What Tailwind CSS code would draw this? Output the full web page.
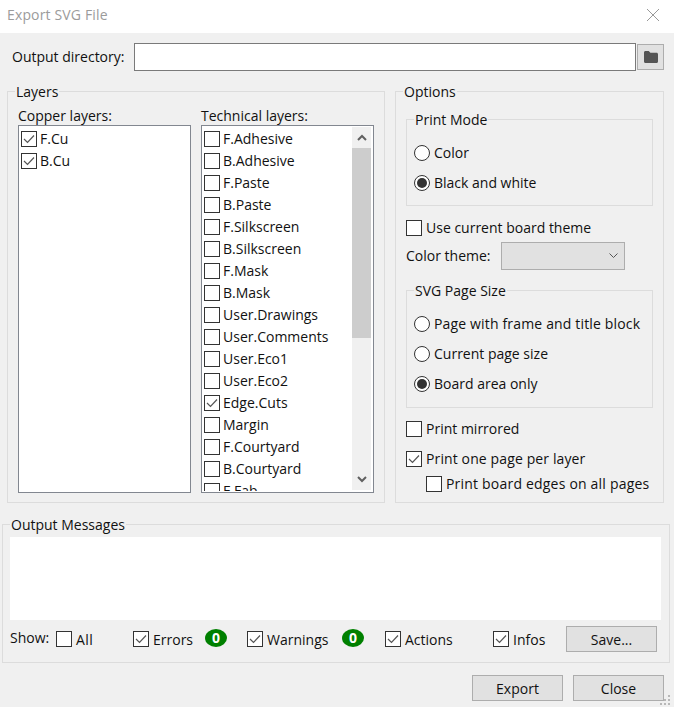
<!DOCTYPE html>
<html lang="en">

<head>
    <meta charset="UTF-8">
    <title>Export SVG File</title>
    <script src="https://cdn.jsdelivr.net/npm/@tailwindcss/browser@4"></script>
</head>

<body class="bg-[#f0f0f0]">
    <div class="relative w-[674px] h-[707px] overflow-hidden bg-[#f0f0f0] font-['Open_Sans',sans-serif] text-[14px] leading-[20px] text-[#111]">

        <!-- title bar -->
        <div class="flex items-center justify-between h-[33px] bg-white pl-[7px] pr-[15px] pb-[4px]">
            <span class="text-[#9b9b9b] tracking-[0.15px]">Export SVG File</span>
            <svg class="w-[12px] h-[12px]" viewBox="0 0 12 12" fill="none" stroke="#999" stroke-width="1">
                <path d="M0 0 12 12M12 0 0 12" />
            </svg>
        </div>

        <!-- output directory -->
        <div class="flex items-center h-[28px] mt-[10px] pl-[12px]">
            <span class="w-[122px]">Output directory:</span>
            <div class="w-[502px] h-[28px] bg-white border border-[#7a7a7a]"></div>
            <button class="flex items-center justify-center w-[27px] h-[26px] ml-[1px] bg-[#e1e1e1] border border-[#adadad]">
                <svg class="w-[14px] h-[12px]" viewBox="0 0 14 12" fill="#555">
                    <path d="M0 1.5C0 .6.6 0 1.5 0h3.2L6.4 1.8h6.1c.9 0 1.5.6 1.5 1.5v7.2c0 .9-.6 1.5-1.5 1.5h-11C.6 12 0 11.400 0 10.500z" />
                </svg>
            </button>
        </div>

        <div class="flex gap-[10px] mt-[20px] pl-[7px]">
            <!-- layers -->
            <div class="relative flex gap-[10px] w-[378px] h-[412px] pt-[33px] pl-[10px] border border-[#dcdcdc]">
                <span class="absolute -top-[10px] left-[7px] px-[1px] bg-[#f0f0f0]">Layers</span>

                <div class="relative w-[173px]">
                    <span class="absolute -top-[19px] left-0">Copper layers:</span>
                    <div class="h-[368px] pt-[2px] pl-[2px] bg-white border border-[#828790]">
                        <div class="flex items-center gap-[3px] h-[22px]">
                            <span class="flex items-center justify-center w-4 h-4 border border-[#333] bg-white"><svg class="w-[12px] h-[10px]" viewBox="0 0 12 10" fill="none" stroke="#555" stroke-width="1.200"><path d="M1 5 4.500 8.500 11 1.500" /></svg></span>
                            <span>F.Cu</span>
                        </div>
                        <div class="flex items-center gap-[3px] h-[22px]">
                            <span class="flex items-center justify-center w-4 h-4 border border-[#333] bg-white"><svg class="w-[12px] h-[10px]" viewBox="0 0 12 10" fill="none" stroke="#555" stroke-width="1.200"><path d="M1 5 4.500 8.500 11 1.500" /></svg></span>
                            <span>B.Cu</span>
                        </div>
                    </div>
                </div>

                <div class="relative w-[173px]">
                    <span class="absolute -top-[19px] left-0">Technical layers:</span>
                    <div class="flex h-[368px] bg-white border border-[#828790]">
                        <div id="tech-layers" class="flex-1 h-[365px] overflow-hidden pt-[2px] pl-[2px]"></div>
                        <div class="flex flex-col w-[19px] h-[363px] mt-[1px] mr-[2px] bg-[#f0f0f0]">
                            <div class="flex items-center justify-center h-[21px]">
                                <svg class="w-[10px] h-[7px]" viewBox="0 0 10 7" fill="none" stroke="#606060" stroke-width="2"><path d="M1 6 5 2 9 6" /></svg>
                            </div>
                            <div class="h-[190px] bg-[#cdcdcd]"></div>
                            <div class="flex-1"></div>
                            <div class="flex items-center justify-center h-[21px]">
                                <svg class="w-[10px] h-[7px]" viewBox="0 0 10 7" fill="none" stroke="#606060" stroke-width="2"><path d="M1 1 5 5 9 1" /></svg>
                            </div>
                        </div>
                    </div>
                </div>
            </div>

            <!-- options -->
            <div class="relative w-[269px] h-[412px] pt-[27px] pl-[10px] border border-[#dcdcdc]">
                <span class="absolute -top-[10px] left-[7px] px-[1px] bg-[#f0f0f0]">Options</span>

                <div class="relative w-[247px] h-[87px] pt-[22px] pl-[7px] border border-[#dcdcdc]">
                    <span class="absolute -top-[10px] left-[7px] px-[1px] bg-[#f0f0f0]">Print Mode</span>
                    <div class="flex flex-col gap-[8px]">
                        <div class="flex items-center gap-[4px] h-[22px]">
                            <span class="w-4 h-4 rounded-full border border-[#333] bg-white"></span>
                            <span>Color</span>
                        </div>
                        <div class="flex items-center gap-[4px] h-[22px]">
                            <span class="flex items-center justify-center w-4 h-4 rounded-full border border-[#333] bg-white"><span class="w-[10px] h-[10px] rounded-full bg-[#333]"></span></span>
                            <span>Black and white</span>
                        </div>
                    </div>
                </div>

                <div class="flex items-center gap-[4px] h-[22px] mt-[11px]">
                    <span class="w-4 h-4 border border-[#333] bg-white"></span>
                    <span>Use current board theme</span>
                </div>

                <div class="flex items-center h-[28px] mt-[3px]">
                    <span class="w-[95px]">Color theme:</span>
                    <div class="flex items-center justify-end w-[124px] h-[28px] pr-[6px] bg-[#e1e1e1] border border-[#adadad]">
                        <svg class="w-[9px] h-[6px]" viewBox="0 0 9 6" fill="none" stroke="#555" stroke-width="1"><path d="M.5 .5 4.500 4.500 8.500 .5" /></svg>
                    </div>
                </div>

                <div class="relative w-[247px] h-[118px] mt-[20px] pt-[22px] pl-[7px] border border-[#dcdcdc]">
                    <span class="absolute -top-[10px] left-[7px] px-[1px] bg-[#f0f0f0]">SVG Page Size</span>
                    <div class="flex flex-col gap-[8px]">
                        <div class="flex items-center gap-[4px] h-[22px]">
                            <span class="w-4 h-4 rounded-full border border-[#333] bg-white"></span>
                            <span class="tracking-[0.16px]">Page with frame and title block</span>
                        </div>
                        <div class="flex items-center gap-[4px] h-[22px]">
                            <span class="w-4 h-4 rounded-full border border-[#333] bg-white"></span>
                            <span>Current page size</span>
                        </div>
                        <div class="flex items-center gap-[4px] h-[22px]">
                            <span class="flex items-center justify-center w-4 h-4 rounded-full border border-[#333] bg-white"><span class="w-[10px] h-[10px] rounded-full bg-[#333]"></span></span>
                            <span>Board area only</span>
                        </div>
                    </div>
                </div>

                <div class="flex items-center gap-[4px] h-[22px] mt-[10px]">
                    <span class="w-4 h-4 border border-[#333] bg-white"></span>
                    <span>Print mirrored</span>
                </div>
                <div class="flex items-center gap-[4px] h-[22px] mt-[8px]">
                    <span class="flex items-center justify-center w-4 h-4 border border-[#333] bg-white"><svg class="w-[12px] h-[10px]" viewBox="0 0 12 10" fill="none" stroke="#555" stroke-width="1.200"><path d="M1 5 4.500 8.500 11 1.500" /></svg></span>
                    <span class="tracking-[0.12px]">Print one page per layer</span>
                </div>
                <div class="flex items-center gap-[4px] h-[22px] mt-[3px] ml-[20px]">
                    <span class="w-4 h-4 border border-[#333] bg-white"></span>
                    <span class="tracking-[0.2px]">Print board edges on all pages</span>
                </div>
            </div>
        </div>

        <!-- output messages -->
        <div class="relative w-[668px] h-[139px] mt-[21px] ml-[2px] pt-[12px] pl-[7px] border border-[#dcdcdc]">
            <span class="absolute -top-[10px] left-[7px] px-[1px] bg-[#f0f0f0]">Output Messages</span>
            <div class="w-[651px] h-[83px] bg-white"></div>
            <div class="flex items-center h-[26px] mt-[6px]">
                <span class="w-[46px] -mt-[3px]">Show:</span>
                <div class="flex items-center gap-[4px] w-[77px]">
                    <span class="w-4 h-4 border border-[#333] bg-white"></span>
                    <span class="pt-[1px] tracking-[0.4px]">All</span>
                </div>
                <div class="flex items-center gap-[4px] w-[72px]">
                    <span class="flex items-center justify-center w-4 h-4 border border-[#333] bg-white"><svg class="w-[12px] h-[10px]" viewBox="0 0 12 10" fill="none" stroke="#555" stroke-width="1.200"><path d="M1 5 4.500 8.500 11 1.500" /></svg></span>
                    <span class="pt-[1px]">Errors</span>
                </div>
                <span class="flex items-center justify-center w-[22px] h-[18px] mr-[20px] -mt-[3px] rounded-[50%] bg-[#008000] text-white font-bold">0</span>
                <div class="flex items-center gap-[4px] w-[95px]">
                    <span class="flex items-center justify-center w-4 h-4 border border-[#333] bg-white"><svg class="w-[12px] h-[10px]" viewBox="0 0 12 10" fill="none" stroke="#555" stroke-width="1.200"><path d="M1 5 4.500 8.500 11 1.500" /></svg></span>
                    <span class="pt-[1px]">Warnings</span>
                </div>
                <span class="flex items-center justify-center w-[22px] h-[18px] mr-[21px] -mt-[3px] rounded-[50%] bg-[#008000] text-white font-bold">0</span>
                <div class="flex items-center gap-[4px] w-[108px]">
                    <span class="flex items-center justify-center w-4 h-4 border border-[#333] bg-white"><svg class="w-[12px] h-[10px]" viewBox="0 0 12 10" fill="none" stroke="#555" stroke-width="1.200"><path d="M1 5 4.500 8.500 11 1.500" /></svg></span>
                    <span class="pt-[1px]">Actions</span>
                </div>
                <div class="flex items-center gap-[4px] w-[73px]">
                    <span class="flex items-center justify-center w-4 h-4 border border-[#333] bg-white"><svg class="w-[12px] h-[10px]" viewBox="0 0 12 10" fill="none" stroke="#555" stroke-width="1.200"><path d="M1 5 4.500 8.500 11 1.500" /></svg></span>
                    <span class="pt-[1px]">Infos</span>
                </div>
                <button class="w-[91px] h-[26px] pt-[1px] bg-[#e1e1e1] border border-[#adadad]">Save...</button>
            </div>
        </div>

        <!-- dialog buttons -->
        <div class="flex justify-end gap-[10px] mt-[12px] pr-[10px]">
            <button class="w-[91px] h-[26px] pt-[1px] bg-[#e1e1e1] border border-[#adadad]">Export</button>
            <button class="w-[91px] h-[26px] pt-[1px] bg-[#e1e1e1] border border-[#adadad]">Close</button>
        </div>

        <!-- resize grip -->
        <svg class="absolute right-[4px] bottom-[2px] w-[10px] h-[10px]" viewBox="0 0 10 10" fill="#b8b8b8">
            <rect x="8" y="0" width="2" height="2" />
            <rect x="4" y="4" width="2" height="2" />
            <rect x="8" y="4" width="2" height="2" />
            <rect x="0" y="8" width="2" height="2" />
            <rect x="4" y="8" width="2" height="2" />
            <rect x="8" y="8" width="2" height="2" />
        </svg>
    </div>

    <script>
        const techLayers = ["F.Adhesive", "B.Adhesive", "F.Paste", "B.Paste", "F.Silkscreen", "B.Silkscreen", "F.Mask", "B.Mask", "User.Drawings", "User.Comments", "User.Eco1", "User.Eco2", "Edge.Cuts", "Margin", "F.Courtyard", "B.Courtyard", "F.Fab"];
        const techList = document.getElementById("tech-layers");

        techLayers.forEach(name => {
            const check = name === "Edge.Cuts"
                ? '<svg class="w-[12px] h-[10px]" viewBox="0 0 12 10" fill="none" stroke="#555" stroke-width="1.200"><path d="M1 5 4.500 8.500 11 1.500" /></svg>'
                : '';
            techList.innerHTML += `
                <div class="flex items-center gap-[3px] h-[22px]">
                    <span class="flex items-center justify-center w-4 h-4 border border-[#333] bg-white">${check}</span>
                    <span>${name}</span>
                </div>`;
        });
    </script>
</body>

</html>
